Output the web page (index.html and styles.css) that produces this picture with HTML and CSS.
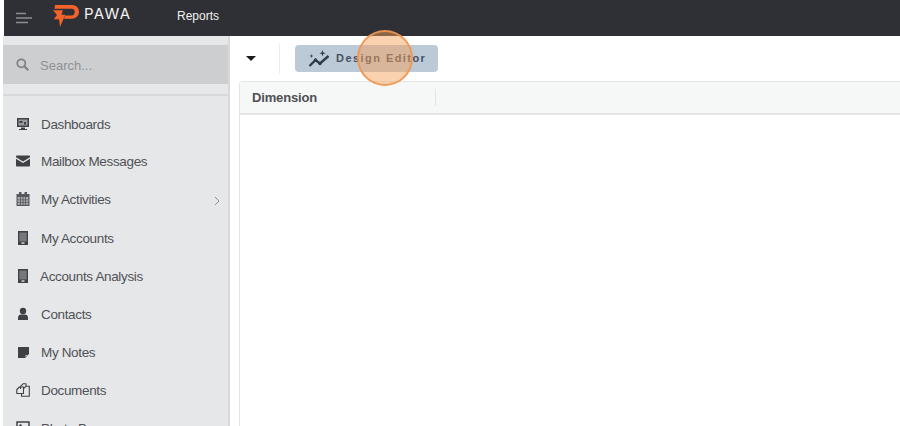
FILE: index.html
```html
<!DOCTYPE html>
<html lang="en">
<head>
<meta charset="utf-8">
<title>Reports</title>
<link rel="stylesheet" href="styles.css">
</head>
<body>
<header class="topbar">
  <div class="burger-cell">
    <svg class="burger" width="18" height="12" viewBox="0 0 18 12"><path d="M1 1.500h10M1 6h16M1 10.500h12" stroke="#8b8d92" stroke-width="1.300" fill="none"/></svg>
  </div>
  <div class="brand">
    <svg class="logo" width="26" height="22" viewBox="0 0 26 22"><path fill-rule="evenodd" d="M2 0h16.500C23 0 26 2.700 26 6.800s-3 7-7.500 7H11l1-3.200h6.500c2 0 3.200-1.500 3.200-3.600S20.500 3.800 18.500 3.800H1.500z" fill="#f2622a"/><path d="M0 5.300h9.800L8.500 9.800h3.800L7 22 6 14.300H.8L4 10z" fill="#f2622a"/></svg>
    <span class="brand-name">PAWA</span>
  </div>
  <span class="page-title">Reports</span>
</header>
<div class="body-row">
  <aside class="sidebar">
    <div class="search">
      <svg width="13" height="13" viewBox="0 0 13 13"><circle cx="5.300" cy="5.300" r="4" stroke="#808285" stroke-width="1.800" fill="none"/><path d="M8.300 8.300l4 4" stroke="#808285" stroke-width="2"/></svg>
      <span class="search-text">Search...</span>
    </div>
    <nav class="menu">
      <div class="item item-1"><svg width="14" height="14" viewBox="0 0 14 14"><path d="M1 1h12v9H1zM5 10.500h4v1.500h2v1H3v-1h2z" fill="#3f4145"/><path d="M2.500 2.500h9v6h-9z" fill="#9a9ca0"/><path d="M3.500 4h3v2h-3zM8 5h2v2.500H8z" fill="#3f4145"/></svg><span>Dashboards</span></div>
      <div class="item item-2"><svg width="14" height="12" viewBox="0 0 14 12"><path d="M1 0.500h12c.6 0 1 .4 1 1v.7L7 6.500 0 2.200v-.7c0-.6.400-1 1-1zM0 3.800l7 4.300 7-4.300V10.500c0 .6-.4 1-1 1H1c-.6 0-1-.4-1-1z" fill="#3f4145"/></svg><span>Mailbox Messages</span></div>
      <div class="item item-3 has-arrow"><svg width="14" height="14" viewBox="0 0 14 14"><path d="M3 0h2.500v2h3V0H11v2h2.500v12H.5V2H3z" fill="#55575b"/><path d="M1.700 5h10.600v7.800H1.700z" fill="#a9abae"/><path d="M1.700 7.400h10.600v.8H1.700zM1.700 10h10.600v.8H1.700zM4.200 5h.8v8h-.8zM6.700 5h.8v8h-.8zM9.200 5h.8v8h-.8z" fill="#55575b"/></svg><span>My Activities</span><svg class="arrow" width="6" height="10" viewBox="0 0 6 10"><path d="M1 1l4 4-4 4" stroke="#8f9194" fill="none"/></svg></div>
      <div class="item item-4"><svg width="14" height="14" viewBox="0 0 14 14"><path d="M2 0h10v14H2z" fill="#3f4145"/><path d="M3.300 1.500h7.400v9H3.300z" fill="#75777b"/><path d="M5.500 11.300h3v1.500h-3z" fill="#d4d6d9"/></svg><span>My Accounts</span></div>
      <div class="item item-5"><svg width="14" height="14" viewBox="0 0 14 14"><path d="M2 0h10v14H2z" fill="#3f4145"/><path d="M3.300 1.500h7.400v9H3.300z" fill="#75777b"/><path d="M5.500 11.300h3v1.500h-3z" fill="#d4d6d9"/></svg><span>Accounts Analysis</span></div>
      <div class="item item-6"><svg width="14" height="14" viewBox="0 0 14 14"><circle cx="7" cy="4" r="3.200" fill="#3f4145"/><path d="M2 13v-2.500C2 8.500 3.500 7.500 5 7.500h4c1.500 0 3 1 3 3V13z" fill="#3f4145"/></svg><span>Contacts</span></div>
      <div class="item item-7"><svg width="14" height="14" viewBox="0 0 14 14"><path d="M2 2h11v7l-4 4H2z" fill="#3f4145"/><path d="M9.500 10h2l-2 2z" fill="#d4d6d9"/></svg><span>My Notes</span></div>
      <div class="item item-8"><svg width="14" height="14" viewBox="0 0 14 14"><path d="M4.500 6V3.300L7 .8h3V4M.8 6.500L3.300 4H7.500v6.500H.8zM7.500 5.500L10 3.300 13.300 3.300V13.300H5.500v-2.800" stroke="#3f4145" stroke-width="1.100" fill="none" stroke-linejoin="round"/></svg><span>Documents</span></div>
      <div class="item item-9"><svg width="14" height="14" viewBox="0 0 14 14"><path d="M1 1h12v12H1z" stroke="#3f4145" stroke-width="1.500" fill="none"/><circle cx="4.500" cy="4.500" r="1.300" fill="#3f4145"/></svg><span>Photo Browser</span></div>
    </nav>
  </aside>
  <main class="content">
    <div class="toolbar">
      <span class="caret"></span>
      <span class="tool-sep"></span>
      <div class="design-btn">
        <svg width="23" height="18" viewBox="0 0 23 18"><path d="M1.500 16l6-6 4.500 3.500L20.500 6" stroke="#2f3b4a" stroke-width="2.400" fill="none"/><circle cx="7.500" cy="10" r="1.700" fill="#2f3b4a"/><circle cx="12" cy="13.500" r="1.700" fill="#2f3b4a"/><path d="M14.500 0l.8 2.400 2.400.8-2.400.8-.8 2.400-.8-2.400-2.400-.8 2.400-.8zM3.500 4l.5 1.500 1.500.5-1.500.5-.5 1.500L3 6.500 1.500 6 3 5.500z" fill="#2f3b4a"/></svg>
        <span class="design-label">Design Editor</span>
      </div>
    </div>
    <section class="grid">
      <div class="grid-head">
        <div class="head-cell">Dimension</div>
      </div>
    </section>
    <div class="pointer"></div>
  </main>
</div>
</body>
</html>
```
FILE: styles.css
```css
* { box-sizing: border-box; }
html, body { margin: 0; height: 100%; overflow: hidden; }
body {
  width: 900px;
  height: 426px;
  background: #ffffff;
  font-family: "Liberation Sans", Arial, sans-serif;
  color: #4a4c50;
}
.topbar {
  height: 36px;
  margin-left: 4px;
  background: #2f3035;
  display: flex;
  align-items: center;
}
.burger-cell {
  width: 40px;
  height: 36px;
  display: flex;
  align-items: center;
  padding-left: 11px;
  flex: none;
}
.brand {
  width: 133px;
  display: flex;
  align-items: center;
  flex: none;
  margin-top: -4px;
  padding-left: 9px;
}
.logo { flex: none; }
.brand-name {
  margin-left: 5px;
  margin-top: -5px;
  color: #f2f2f2;
  font-family: "Inter", "Liberation Sans", sans-serif;
  font-size: 15px;
  letter-spacing: 1.3px;
  font-weight: 400;
}
.page-title {
  color: #f0f0f0;
  font-size: 12px;
  margin-top: -4px;
}
.body-row {
  display: flex;
  height: 390px;
}
.sidebar {
  width: 227px;
  margin-left: 3px;
  background: #e6e7e9;
  border-right: 2px solid #d6d8da;
  padding-top: 9px;
  overflow: hidden;
  flex: none;
}
.search {
  height: 39px;
  background: #cdced0;
  display: flex;
  align-items: center;
  padding-left: 13px;
  gap: 11px;
}
.search-text {
  color: #8f9194;
  font-size: 13px;
  margin-top: 1px;
}
.menu {
  margin-top: 10px;
  border-top: 2px solid #d7d9db;
  padding-top: 9px;
}
.item {
  display: flex;
  align-items: center;
  height: 38px;
  padding-left: 13px;
  font-size: 13.5px;
  letter-spacing: -0.35px;
  color: #505256;
  position: relative;
}
.item svg:first-child { flex: none; width: 14px; margin-right: 11px; }
.arrow { position: absolute; left: 211px; top: 16px; }
.item-1 { height: 37px; padding-top: 1px; }
.item-4 { height: 39px; padding-top: 1px; }
.item-5 span { margin-left: -1px; }
.content {
  flex: 1;
  position: relative;
  min-width: 0;
  padding-left: 10px;
  background: #ffffff;
}
.toolbar {
  height: 45px;
  display: flex;
  align-items: center;
}
.caret {
  width: 0;
  height: 0;
  margin-left: 6px;
  border-left: 5px solid transparent;
  border-right: 5px solid transparent;
  border-top: 5px solid #1b1b1d;
}
.tool-sep {
  width: 1px;
  height: 31px;
  background: #eceded;
  margin-left: 23px;
}
.design-btn {
  margin-left: 15px;
  width: 143px;
  height: 27px;
  background: #bccad8;
  border-radius: 4px;
  display: flex;
  align-items: center;
  padding-left: 13px;
  gap: 5px;
}
.design-label {
  color: #46505e;
  font-size: 11px;
  font-weight: bold;
  letter-spacing: 1.45px;
  white-space: nowrap;
  margin-top: -1px;
}
.grid {
  height: 345px;
  border: 1px solid #e2e4e5;
  border-right: 0;
  border-bottom: 0;
  border-top-left-radius: 4px;
  margin-left: -1px;
}
.grid-head {
  height: 33px;
  background: #f6f7f7;
  border-bottom: 2px solid #e4e5e6;
  display: flex;
  align-items: center;
}
.head-cell {
  width: 196px;
  height: 17px;
  padding-left: 12px;
  line-height: 18px;
  font-size: 13px;
  letter-spacing: -0.15px;
  font-weight: bold;
  color: #4e5054;
  border-right: 1px solid #e4e5e6;
}
.pointer {
  position: absolute;
  left: 127px;
  top: -6px;
  width: 56px;
  height: 56px;
  border-radius: 50%;
  background: rgba(245, 160, 90, 0.48);
  border: 2px solid rgba(240, 150, 80, 0.9);
}
```
